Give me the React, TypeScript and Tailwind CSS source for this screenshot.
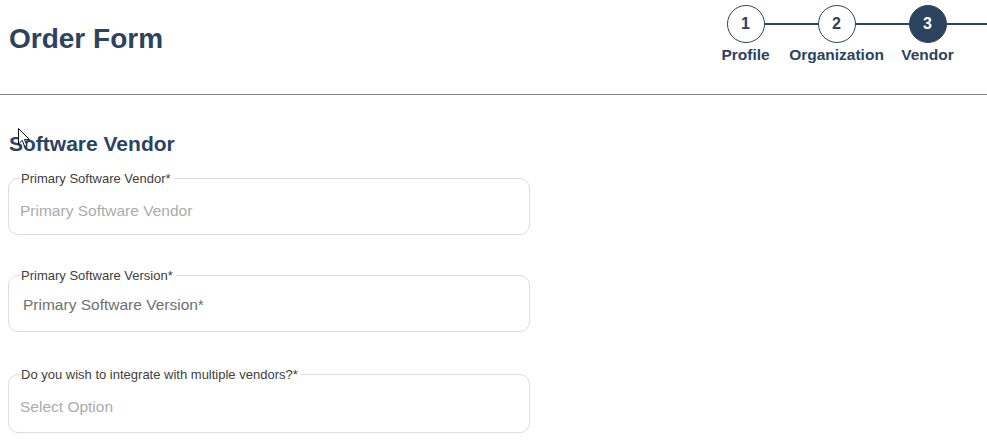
import React from "react";

const steps = [
    { n: 1, label: "Profile" },
    { n: 2, label: "Organization" },
    { n: 3, label: "Vendor" },
];

const ACTIVE = 3;

function Stepper() {
    return (
        <div className="flex w-[287px] shrink-0 flex-col pt-[5px]">
            {/* circles and connectors */}
            <div className="flex items-center pl-[26.5px]">
                {steps.map((s, i) => (
                    <React.Fragment key={s.n}>
                        <div
                            className={`flex h-[38px] w-[38px] shrink-0 items-center justify-center rounded-full border-[1.5px] border-[#2c4360] text-[16px] font-bold ${
                                s.n === ACTIVE ? "bg-[#2c4360] text-white" : "bg-white text-[#2c4360]"
                            }`}
                        >
                            {s.n}
                        </div>
                        <div className={`h-[1.5px] bg-[#2c4360] ${i === steps.length - 1 ? "flex-1" : "w-[53px]"}`} />
                    </React.Fragment>
                ))}
            </div>
            {/* labels */}
            <div className="mt-[3px] flex">
                {steps.map((s) => (
                    <div key={s.n} className="flex w-[91px] justify-center">
                        <span className="whitespace-nowrap text-[15.5px] font-bold leading-[18px] text-[#2c4360]">
                            {s.label}
                        </span>
                    </div>
                ))}
            </div>
        </div>
    );
}

interface FieldProps {
    label: string;
    placeholder: string;
    dark?: boolean;
    className?: string;
}

function Field({ label, placeholder, dark, className = "" }: FieldProps) {
    return (
        <fieldset className={`w-[522px] rounded-[10px] border border-[#dcdcdc] px-[11px] pb-[13px] ${className}`}>
            <legend className="pl-[1px] pr-[3px] text-[13px] leading-[15px] text-[#404040]">{label}</legend>
            <input
                readOnly
                placeholder={placeholder}
                className={`block h-[20px] w-full bg-transparent text-[15.5px] outline-none ${
                    dark
                        ? "mt-[12px] mb-[3px] pl-[3px] placeholder:text-[#707070]"
                        : "mt-[15px] pl-0 placeholder:text-[#ababab]"
                }`}
            />
        </fieldset>
    );
}

function Cursor() {
    return (
        <svg
            className="pointer-events-none absolute left-[18px] top-[128px]"
            width="13"
            height="20"
            viewBox="0 0 13 20"
        >
            <path
                d="M0.5 0.5 L0.5 16 L4.2 12.4 L6.8 18.6 L9 17.6 L6.5 11.6 L11.6 11.6 Z"
                fill="white"
                stroke="#111"
                strokeWidth="1"
                strokeLinejoin="round"
            />
        </svg>
    );
}

export default function App() {
    return (
        <div
            className="relative min-h-[441px] w-full overflow-hidden bg-white"
            style={{ fontFamily: '"Liberation Sans", Arial, sans-serif' }}
        >
            {/* Header */}
            <header className="flex h-[95px] items-start justify-between border-b border-[#858585]">
                <h1 className="mt-[23px] pl-[9px] text-[28px] font-bold leading-[32px] text-[#2c4360]">Order Form</h1>
                <Stepper />
            </header>

            {/* Form */}
            <main className="px-[8px] pt-[37px]">
                <h2 className="pl-[1px] text-[21px] font-bold leading-[24px] text-[#2c4360]">Software Vendor</h2>
                <div className="mt-[14.5px] flex flex-col gap-[33px]">
                    <Field label="Primary Software Vendor*" placeholder="Primary Software Vendor" />
                    <Field label="Primary Software Version*" placeholder="Primary Software Version*" dark />
                    <Field
                        label="Do you wish to integrate with multiple vendors?*"
                        placeholder="Select Option"
                        className="mt-[2px] pb-[15px]"
                    />
                </div>
            </main>

            <Cursor />
        </div>
    );
}
